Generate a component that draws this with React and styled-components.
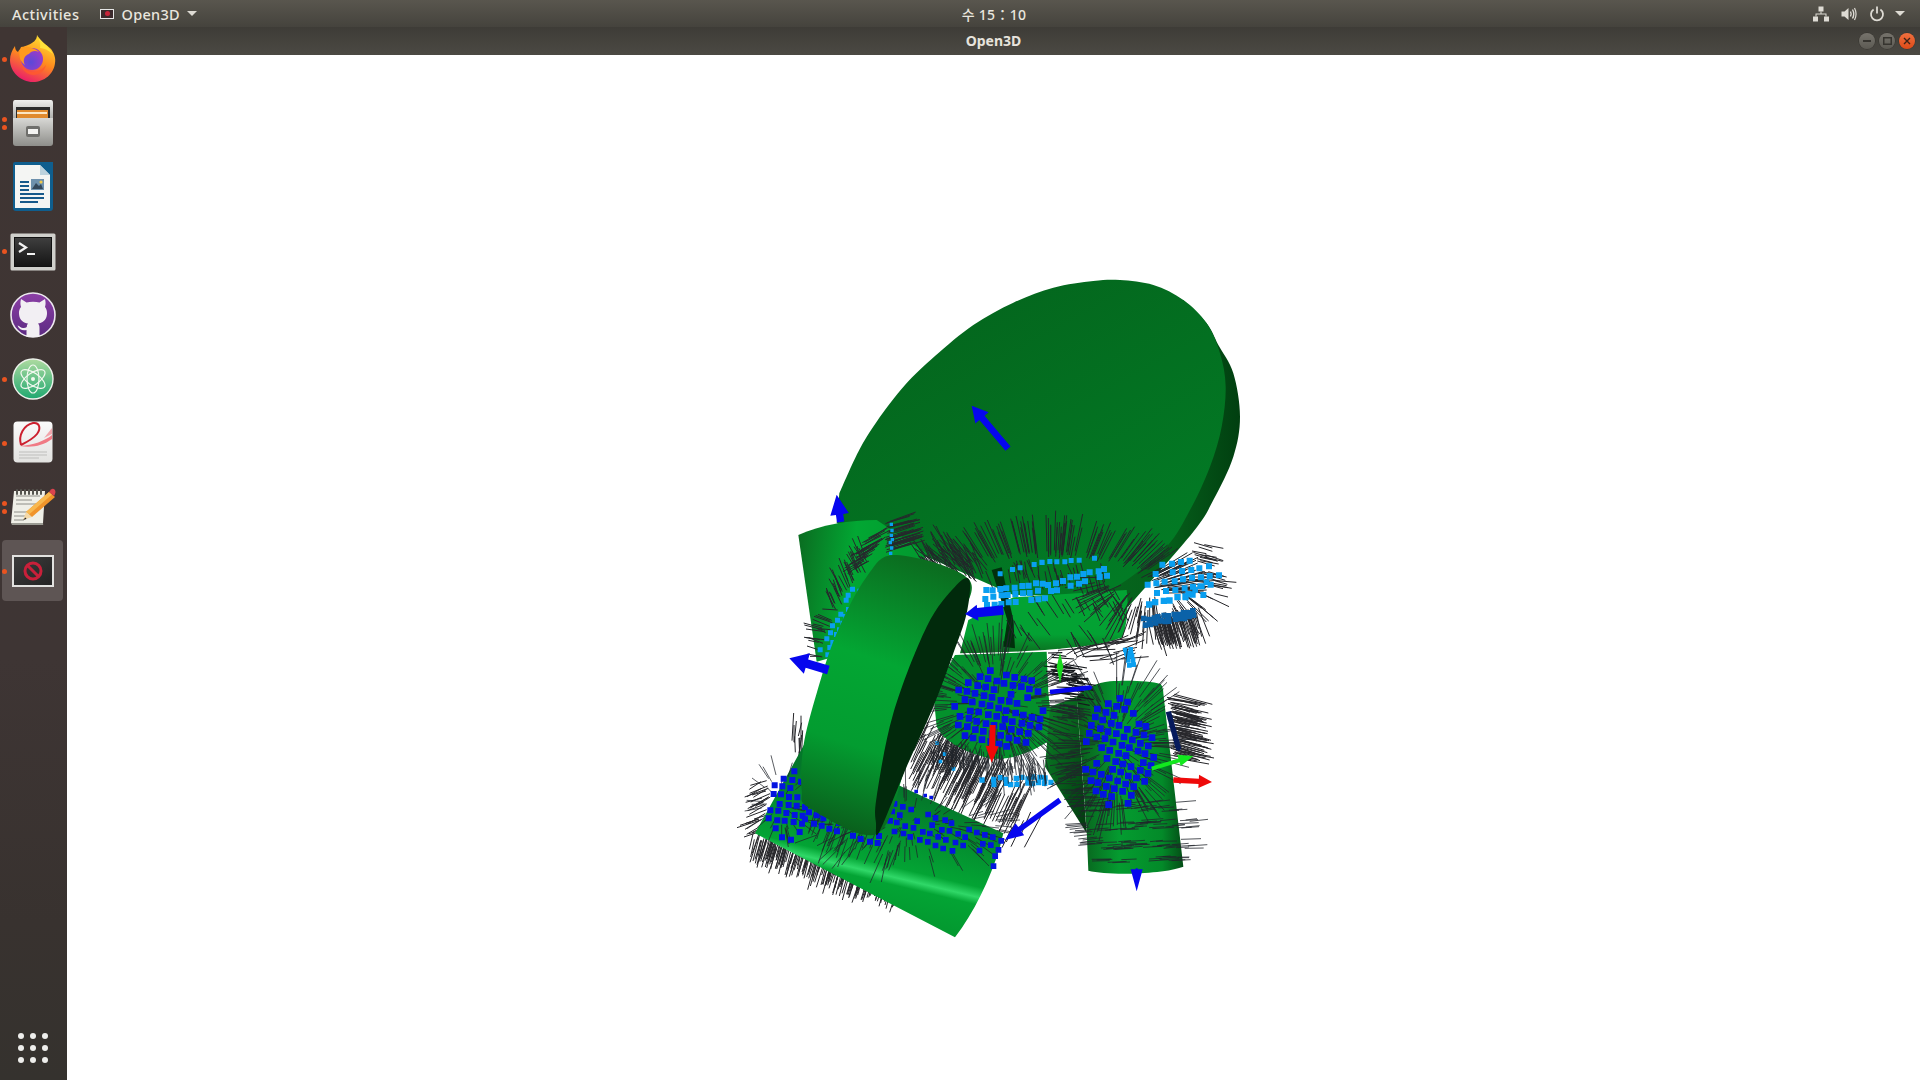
import React from "react";
import styled, { createGlobalStyle } from "styled-components";

const GlobalStyle = createGlobalStyle`
  html, body { margin: 0; padding: 0; background: #fff; overflow: hidden; }
  body { font-family: "Noto Sans", "Noto Sans CJK KR", sans-serif; }
`;

/* ---------- helpers for the 3D scene drawing ---------- */

const makeRandom = (seed) => () => {
  seed = (seed + 0x6d2b79f5) | 0;
  let t = Math.imul(seed ^ (seed >>> 15), 1 | seed);
  t = (t + Math.imul(t ^ (t >>> 7), 61 | t)) ^ t;
  return ((t ^ (t >>> 14)) >>> 0) / 4294967296;
};
const rnd = makeRandom(42);
const wobble = (v, amount = 4) => (v + (rnd() - 0.5) * amount).toFixed(0);

const smooth = (pts, close = true) => {
  const n = pts.length;
  const at = (i) => (close ? pts[(i + n) % n] : pts[Math.max(0, Math.min(n - 1, i))]);
  let d = `M${pts[0][0]} ${pts[0][1]}`;
  for (let i = 0; i < (close ? n : n - 1); i++) {
    const [p0, p1, p2, p3] = [at(i - 1), at(i), at(i + 1), at(i + 2)];
    const c1 = [p1[0] + (p2[0] - p0[0]) / 6, p1[1] + (p2[1] - p0[1]) / 6];
    const c2 = [p2[0] - (p3[0] - p1[0]) / 6, p2[1] - (p3[1] - p1[1]) / 6];
    d += `C${c1[0].toFixed(1)} ${c1[1].toFixed(1)} ${c2[0].toFixed(1)} ${c2[1].toFixed(1)} ${p2[0]} ${p2[1]}`;
  }
  return close ? d + "Z" : d;
};

// hairs growing from a line
const band = ([x0, y0], [x1, y1], width, n, dx, dy, jitter = 0.18) => {
  let d = "";
  for (let i = 0; i < n; i++) {
    const t = rnd();
    const x = x0 + (x1 - x0) * t + (rnd() - 0.5) * width;
    const y = y0 + (y1 - y0) * t + (rnd() - 0.5) * width;
    const k = 0.65 + rnd() * 0.55;
    const len = Math.hypot(dx, dy);
    const ex = dx * k + (rnd() - 0.5) * len * jitter;
    const ey = dy * k + (rnd() - 0.5) * len * jitter;
    d += `M${x.toFixed(0)} ${y.toFixed(0)}l${ex.toFixed(0)} ${ey.toFixed(0)}`;
  }
  return d;
};

// hairs radiating from an ellipse, short in the middle and long at the rim
const burst = (cx, cy, rx, ry, n, len, a0 = 0, a1 = 360, inner = 0) => {
  let d = "";
  for (let i = 0; i < n; i++) {
    const a = ((a0 + (a1 - a0) * rnd()) * Math.PI) / 180;
    const r = inner + (1 - inner) * Math.sqrt(rnd());
    const x = cx + Math.cos(a) * rx * r;
    const y = cy + Math.sin(a) * ry * r;
    const l = len * (0.15 + 0.95 * r) * (0.8 + rnd() * 0.35);
    d += `M${x.toFixed(0)} ${y.toFixed(0)}l${(Math.cos(a) * l).toFixed(0)} ${(Math.sin(a) * l).toFixed(0)}`;
  }
  return d;
};

// square point markers on a slightly rotated grid, thinning out to the rim
const dots = (cx, cy, rx, ry, step, rot, size, keep = 1) => {
  let d = "";
  const c = Math.cos((rot * Math.PI) / 180);
  const s = Math.sin((rot * Math.PI) / 180);
  const m = Math.ceil(Math.max(rx, ry) / step) + 1;
  for (let i = -m; i <= m; i++) {
    for (let j = -m; j <= m; j++) {
      const x = i * step * c - j * step * s;
      const y = i * step * s + j * step * c;
      const q = (x / rx) ** 2 + (y / ry) ** 2;
      if (q > 1) continue;
      if (rnd() > keep * (1 - q * 0.25)) continue;
      d += `M${wobble(cx + x)} ${wobble(cy + y)}h${size}v${size}h-${size}Z`;
    }
  }
  return d;
};

const dotsAlong = ([x0, y0], [x1, y1], width, step, size, keep = 0.85) => {
  let d = "";
  const len = Math.hypot(x1 - x0, y1 - y0);
  const ux = (x1 - x0) / len;
  const uy = (y1 - y0) / len;
  for (let a = 0; a < len; a += step) {
    for (let b = -width / 2; b <= width / 2; b += step) {
      if (rnd() > keep) continue;
      const x = x0 + ux * a - uy * b;
      const y = y0 + uy * a + ux * b;
      d += `M${wobble(x, 6)} ${wobble(y, 6)}h${size}v${size}h-${size}Z`;
    }
  }
  return d;
};

const arrowPath = (x1, y1, x2, y2, w, headW, headL) => {
  const l = Math.hypot(x2 - x1, y2 - y1);
  const ux = (x2 - x1) / l;
  const uy = (y2 - y1) / l;
  const nx = -uy;
  const ny = ux;
  const bx = x2 - ux * headL;
  const by = y2 - uy * headL;
  const p = (x, y) => `${x.toFixed(1)} ${y.toFixed(1)}`;
  return (
    `M${p(x1 + nx * w, y1 + ny * w)}L${p(bx + nx * w, by + ny * w)}L${p(bx + nx * headW, by + ny * headW)}` +
    `L${p(x2, y2)}L${p(bx - nx * headW, by - ny * headW)}L${p(bx - nx * w, by - ny * w)}L${p(x1 - nx * w, y1 - ny * w)}Z`
  );
};

const DISC_FACE =
  smooth(
    [
      [358, 40], [415, -85], [470, -175], [555, -285], [645, -372], [760, -465], [880, -532], [1000, -577], [1120, -597],
      [1200, -600], [1300, -585], [1390, -540], [1460, -470], [1500, -380], [1517, -280], [1505, -160],
      [1470, -40], [1410, 90], [1340, 200], [1220, 300], [1130, 350],
    ],
    false
  ) + "L880 345L620 230L350 130Z";

const DISC_RIM =
  smooth(
    [
      [1390, -540], [1460, -470], [1495, -405], [1540, -320], [1560, -190], [1540, -70], [1480, 60],
      [1420, 155], [1225, 380],
    ],
    false
  ) + "L1115 360L1000 300Z";

const HAIR_BACK = [
  band([1040, 500], [1210, 520], 70, 40, 70, -20, 0.5),
  band([590, 830], [850, 1040], 140, 190, 45, -95, 0.1),
  band([110, 1070], [540, 1210], 30, 170, -20, 70, 0.1),
  band([140, 900], [125, 1060], 40, 26, -55, 25, 0.3),
  band([225, 770], [240, 850], 30, 12, 5, -65, 0.2),
  band([1350, 640], [1370, 830], 30, 90, 90, 22, 0.18),
].join("");

const HAIR_CLUSTER = [
  burst(1290, 290, 170, 110, 70, 90, 0, 180, 0.5),
  band([1430, 200], [1470, 330], 40, 26, 50, 12),
  band([1290, 420], [1420, 395], 30, 75, 26, 85, 0.15),
].join("");

const HAIR_FRINGE = [
  burst(990, 340, 380, 130, 190, 95, 180, 360, 0.78),
  band([620, 220], [800, 300], 60, 50, -40, -70, 0.3),
  band([850, 260], [1150, 270], 50, 34, 15, 55, 0.3),
  band([900, 360], [1210, 340], 60, 20, 30, 55, 0.25),
  band([870, 420], [1200, 470], 60, 16, 28, 50, 0.35),
].join("");

const HAIR_UPPER_LEFT = [
  band([505, 130], [505, 215], 20, 42, 85, -25, 0.15),
  band([500, 140], [430, 260], 25, 35, -50, 30, 0.2),
  band([440, 240], [340, 380], 30, 34, -25, -55, 0.25),
  band([340, 380], [290, 530], 30, 18, -45, -10, 0.5),
].join("");

const HAIR_SPHERE = [
  burst(830, 670, 175, 165, 210, 95),
  band([650, 800], [980, 860], 50, 90, 5, 55, 0.4),
].join("");

const HAIR_CYLINDER_BOTTOM = [
  burst(560, 1030, 300, 110, 130, 60),
  burst(185, 970, 70, 90, 34, 55),
  band([290, 1000], [530, 1110], 70, 35, -30, 75, 0.2),
].join("");

const HAIR_RIGHT = [
  burst(1190, 790, 130, 190, 190, 95),
  band([1110, 980], [1380, 980], 30, 20, 55, -6, 0.1),
  band([1110, 1040], [1400, 1030], 30, 30, 55, -4, 0.1),
  band([1110, 1100], [1400, 1090], 30, 30, 55, -3, 0.08),
  band([1120, 1145], [1380, 1135], 14, 16, 50, -2, 0.06),
  band([1030, 1030], [1090, 1100], 20, 14, 60, -5, 0.1),
  band([1000, 840], [1090, 1000], 60, 40, 70, -5, 0.15),
  band([1000, 690], [1060, 700], 50, 30, 50, 8, 0.1),
].join("");

const HAIR_WINDOW = band([985, 530], [1060, 650], 60, 46, 55, 5, 0.25);

const DOTS_CYAN = [
  dotsAlong([790, 345], [980, 320], 44, 22, 18, 0.9),
  dotsAlong([980, 320], [1160, 270], 34, 22, 18, 0.95),
  dotsAlong([810, 285], [960, 245], 10, 22, 15, 0.8),
  dotsAlong([960, 245], [1130, 232], 10, 22, 15, 0.8),
  dots(1380, 290, 110, 65, 27, -8, 18, 1),
  dotsAlong([1280, 375], [1440, 335], 20, 22, 19, 0.95),
  dotsAlong([1400, 340], [1470, 300], 20, 22, 17, 0.9),
  dotsAlong([505, 130], [505, 215], 8, 14, 10, 0.9),
  dotsAlong([405, 325], [310, 515], 50, 21, 15, 0.85),
  dotsAlong([1215, 500], [1225, 550], 16, 12, 14, 1),
  dotsAlong([780, 900], [1000, 895], 22, 17, 16, 0.75),
  dotsAlong([640, 790], [690, 880], 20, 18, 11, 0.5),
].join("");

const DOTS_CLUSTER_DARK = dotsAlong([1265, 418], [1420, 392], 16, 15, 17, 1);

const DOTS_BLUE = [
  dots(825, 675, 140, 125, 26, 14, 20, 1),
  dots(1185, 810, 112, 165, 26, 20, 20, 1),
  dots(195, 965, 66, 105, 25, 10, 18, 1),
  dotsAlong([250, 1005], [480, 1080], 36, 25, 18, 0.9),
  dotsAlong([500, 1010], [830, 1125], 100, 26, 17, 0.78),
  dotsAlong([560, 930], [780, 1020], 16, 24, 11, 0.4),
].join("");

const BLUE_ARROWS = [
  arrowPath(864, -94, 755, -223, 10, 26, 48),
  arrowPath(362, 126, 350, 44, 11, 28, 60),
  arrowPath(325, 570, 208, 535, 13, 32, 55),
  arrowPath(850, 390, 735, 402, 14, 24, 38),
  arrowPath(1020, 960, 855, 1080, 8, 22, 55),
  arrowPath(1250, 1165, 1250, 1234, 3, 18, 66),
  arrowPath(990, 636, 1118, 622, 7, 8, 8),
].join("");

/* ---------- page layout ---------- */

const Screen = styled.div`
  width: 1920px;
  height: 1080px;
  display: flex;
  flex-direction: column;
  overflow: hidden;
`;

const TopBar = styled.header`
  height: 27px;
  flex: none;
  display: grid;
  grid-template-columns: 1fr auto 1fr;
  align-items: center;
  background: linear-gradient(#59564e, #45433d);
  color: #e9e6df;
  font-size: 14.5px;
  font-weight: 500;
`;

const BarLeft = styled.div`
  display: flex;
  align-items: center;
`;

const Activities = styled.span`
  margin-left: 12px;
  letter-spacing: 0.5px;
`;

const AppMenu = styled.div`
  display: flex;
  align-items: center;
  margin-left: 21px;
  gap: 7px;
  letter-spacing: 0.3px;
`;

const AppMenuIcon = styled.span`
  width: 14px;
  height: 10px;
  box-sizing: border-box;
  border: 1px solid #e6e6e6;
  background: #3c2a2c;
  display: grid;
  place-items: center;
  &::after {
    content: "";
    width: 5px;
    height: 5px;
    border-radius: 50%;
    background: #c9243a;
  }
`;

const Caret = styled.span`
  width: 0;
  height: 0;
  margin-left: ${(p) => p.$gap || 0}px;
  border-left: 5px solid transparent;
  border-right: 5px solid transparent;
  border-top: 5px solid #dedbd4;
`;

const Clock = styled.div`
  padding-left: 68px;
  font-weight: 500;
  font-size: 14px;
  letter-spacing: 0.3px;
  font-family: "Noto Sans", "Noto Sans CJK KR", sans-serif;
  white-space: pre;
`;

const BarRight = styled.div`
  display: flex;
  align-items: center;
  justify-content: flex-end;
  gap: 12px;
  padding-right: 15px;
  svg { display: block; }
`;

const Body = styled.div`
  flex: 1;
  min-height: 0;
  display: flex;
`;

const Dock = styled.nav`
  width: 67px;
  flex: none;
  display: flex;
  flex-direction: column;
  background: linear-gradient(#3f3533 0%, #3e3534 60%, #38322f 85%, #35322e 100%);
`;

const DockItem = styled.div`
  position: relative;
  height: 64px;
  flex: none;
  padding-right: 1px;
  box-sizing: border-box;
  display: grid;
  place-items: center;
  &::before {
    content: "";
    display: ${(p) => (p.$active ? "block" : "none")};
    position: absolute;
    left: 2px;
    top: 1px;
    width: 61px;
    height: 61px;
    border-radius: 4px;
    background: #5e5554;
  }
  svg {
    position: relative;
    display: block;
  }
`;

const Pips = styled.span`
  position: absolute;
  left: 2px;
  top: 0;
  bottom: 0;
  display: flex;
  flex-direction: column;
  justify-content: center;
  gap: 3px;
`;

const Pip = styled.i`
  width: 5px;
  height: 5px;
  border-radius: 50%;
  background: #e95420;
`;

const AppGrid = styled.div`
  margin: auto 0 17px 18px;
  display: grid;
  grid-template-columns: repeat(3, 6px);
  gap: 6px;
`;

const AppGridDot = styled.i`
  width: 6px;
  height: 6px;
  border-radius: 50%;
  background: #eeeeec;
`;

const Main = styled.main`
  flex: 1;
  min-width: 0;
  display: flex;
  flex-direction: column;
`;

const TitleBar = styled.div`
  position: relative;
  height: 28px;
  flex: none;
  display: flex;
  align-items: center;
  justify-content: center;
  padding-bottom: 2px;
  box-sizing: border-box;
  background: linear-gradient(#3e3c37, #4b4943);
  color: #e6e3dc;
  font-size: 14px;
  font-weight: 700;
`;

const WindowButtons = styled.div`
  position: absolute;
  right: 5px;
  top: 6px;
  display: flex;
  gap: 4px;
`;

const WindowButton = styled.span`
  width: 16px;
  height: 16px;
  border-radius: 50%;
  display: grid;
  place-items: center;
  background: ${(p) => (p.$close ? "linear-gradient(#f0703f, #dc4a17)" : "linear-gradient(#76736c, #5c5a53)")};
  box-shadow: 0 0 0 0.5px #35332e;
  svg { display: block; }
`;

const Viewport = styled.div`
  flex: 1;
  min-height: 0;
  background: #fff;
`;

const SceneSvg = styled.svg`
  display: block;
  width: 100%;
  height: 100%;
`;

/* ---------- 3D scene ---------- */

const Scene = () => (
  <SceneSvg viewBox="-1959 -1275 5559 3075" preserveAspectRatio="xMinYMin meet">
    <defs>
      <linearGradient id="discFace" x1="0.25" y1="0.1" x2="0.8" y2="0.9">
        <stop offset="0" stopColor="#04661d" />
        <stop offset="1" stopColor="#027b25" />
      </linearGradient>
      <linearGradient id="discRim" x1="0" y1="0.5" x2="1" y2="0.5">
        <stop offset="0" stopColor="#06691e" />
        <stop offset="0.6" stopColor="#05601b" />
        <stop offset="1" stopColor="#013f10" />
      </linearGradient>
      <linearGradient id="leftCyl" x1="0" y1="0" x2="1" y2="0.15">
        <stop offset="0" stopColor="#0b6a20" />
        <stop offset="0.45" stopColor="#02a733" />
        <stop offset="1" stopColor="#02992e" />
      </linearGradient>
      <linearGradient id="tilted" x1="0.55" y1="0" x2="0.35" y2="1">
        <stop offset="0" stopColor="#0b6e20" />
        <stop offset="0.38" stopColor="#03a633" />
        <stop offset="0.7" stopColor="#039c30" />
        <stop offset="1" stopColor="#0a5f1c" />
      </linearGradient>
      <linearGradient id="bottomCyl" x1="0.6" y1="0.25" x2="0.42" y2="0.85">
        <stop offset="0" stopColor="#04762a" />
        <stop offset="0.62" stopColor="#03a434" />
        <stop offset="0.7" stopColor="#30d868" />
        <stop offset="0.76" stopColor="#03a434" />
        <stop offset="1" stopColor="#039a30" />
      </linearGradient>
      <linearGradient id="rightCyl" x1="0" y1="0" x2="1" y2="0">
        <stop offset="0" stopColor="#0a5a1b" />
        <stop offset="0.4" stopColor="#049c30" />
        <stop offset="0.8" stopColor="#038a29" />
        <stop offset="1" stopColor="#044d16" />
      </linearGradient>
      <linearGradient id="midCyl" x1="0" y1="0" x2="0" y2="1">
        <stop offset="0" stopColor="#03a433" />
        <stop offset="0.7" stopColor="#03a133" />
        <stop offset="1" stopColor="#0c6e20" />
      </linearGradient>
      <linearGradient id="wedge" x1="0" y1="0" x2="1" y2="1">
        <stop offset="0" stopColor="#0b8127" />
        <stop offset="1" stopColor="#01390e" />
      </linearGradient>
    </defs>

    <path d={HAIR_BACK} stroke="#26262a" strokeWidth="3" fill="none" />

    {/* big disc */}
    <path d={DISC_RIM} fill="url(#discRim)" />
    <path d={DISC_FACE} fill="url(#discFace)" />

    {/* cylinder on the upper left */}
    <path d="M235 165C300 135 390 120 470 120L620 220L520 480L290 545Z" fill="url(#leftCyl)" />

    {/* central cylinder */}
    <path d="M880 352L1220 330C1226 380 1222 430 1208 472C1130 500 1000 515 720 520L745 420Z" fill="url(#midCyl)" />
    <path d="M815 270L845 262L880 420L885 505L850 500L862 420Z" fill="#012f0c" />

    {/* sphere patch */}
    <path d="M640 640L705 525L980 515L985 640L1000 775C930 820 860 850 790 830C720 810 670 780 650 740Z" fill="#04912c" />

    <path d={HAIR_CLUSTER} stroke="#26262a" strokeWidth="3" fill="none" />
    <path d={HAIR_FRINGE} stroke="#22262a" strokeWidth="3" fill="none" />
    <path d={HAIR_UPPER_LEFT} stroke="#26282c" strokeWidth="3" fill="none" />
    <path d={DOTS_CYAN} fill="#0a9ff0" />
    <path d={DOTS_CLUSTER_DARK} fill="#0b62a8" />

    {/* wedge and right cylinder */}
    <path d="M990 680L1070 650L1100 1060L975 860Z" fill="url(#wedge)" />
    <path
      d="M1070 650C1095 625 1130 608 1170 604C1220 600 1290 602 1322 612C1328 620 1330 630 1330 640L1390 1160C1330 1182 1170 1188 1105 1172L1100 1050Z"
      fill="url(#rightCyl)"
    />

    {/* bottom cylinder */}
    <path d="M260 780L105 1060L705 1372C760 1300 810 1200 840 1100L850 1060L555 925Z" fill="url(#bottomCyl)" />

    <path d={HAIR_SPHERE} stroke="#20242a" strokeWidth="2.6" fill="none" opacity="0.9" />
    <path d={HAIR_RIGHT} stroke="#20242a" strokeWidth="2.6" fill="none" opacity="0.9" />
    <path d={HAIR_CYLINDER_BOTTOM} stroke="#20242a" strokeWidth="2.6" fill="none" opacity="0.85" />
    <path d={HAIR_WINDOW} stroke="#15181c" strokeWidth="3.5" fill="none" />
    <path d={DOTS_BLUE} fill="#0414e0" />

    {/* tilted disc in front */}
    <path
      d={smooth([
        [530, 225], [440, 290], [350, 460], [290, 640], [250, 800], [245, 930], [270, 985], [470, 1062],
        [560, 850], [640, 620], [700, 450], [748, 300],
      ])}
      fill="url(#tilted)"
    />
    <path
      d={smooth([
        [748, 300], [740, 400], [700, 520], [640, 680], [560, 860], [478, 1055], [468, 1030], [470, 950],
        [520, 700], [620, 440], [705, 320],
      ])}
      fill="#012a0c"
    />

    {/* axis arrows */}
    <path d={BLUE_ARROWS} fill="#0606ee" />
    <path d={arrowPath(818, 735, 815, 848, 9, 20, 50)} fill="#f00808" />
    <path d={arrowPath(1360, 900, 1476, 906, 8, 20, 40)} fill="#ee0a0a" />
    <path d={arrowPath(1295, 866, 1420, 828, 6, 18, 45)} fill="#12e81e" />
    <path d="M1020 518L1030 560L1020 610L1010 560Z" fill="#18d81e" />
    <path d={arrowPath(1345, 695, 1378, 815, 8, 9, 10)} fill="#061a5c" />
  </SceneSvg>
);

/* ---------- dock icons ---------- */

const FirefoxIcon = () => (
  <svg width="46" height="47" viewBox="0 0 46 47" style={{ marginTop: -2 }}>
    <defs>
      <linearGradient id="ffBody" x1="0.7" y1="0.1" x2="0.3" y2="1">
        <stop offset="0" stopColor="#ffd42e" />
        <stop offset="0.45" stopColor="#ff8a1e" />
        <stop offset="1" stopColor="#e9176e" />
      </linearGradient>
      <radialGradient id="ffGlobe" cx="0.45" cy="0.65" r="0.6">
        <stop offset="0" stopColor="#5b48d8" />
        <stop offset="1" stopColor="#9a3cc8" />
      </radialGradient>
    </defs>
    <path d="M27 0C29 6 36 9 41 14C44 18 46 23 45 28C44 39 34 47 23 47C11 47 0 37 0 25C0 20 2 15 5 11C5 14 6 16 8 17C10 13 15 11 18 10C23 8 27 5 27 0Z" fill="url(#ffBody)" />
    <path d="M27 0C31 7 39 11 43 19C38 15 34 13 30 13C31 8 29 5 27 0Z" fill="#ffe23a" />
    <circle cx="22" cy="24" r="11" fill="url(#ffGlobe)" />
    <path d="M11 12C17 11 25 13 29 17C25 15 21 16 19 19C15 20 12 25 15 30C9 26 8 18 11 12Z" fill="#ff9a1e" />
    <path d="M11 29C15 38 28 40 36 30C33 43 14 44 11 29Z" fill="#ff5a2c" opacity="0.8" />
  </svg>
);

const FilesIcon = () => (
  <svg width="42" height="46" viewBox="0 0 42 46">
    <defs>
      <linearGradient id="cabTop" x1="0" y1="0" x2="0" y2="1">
        <stop offset="0" stopColor="#f0f0ee" />
        <stop offset="1" stopColor="#a9a9a6" />
      </linearGradient>
      <linearGradient id="cabFront" x1="0" y1="0" x2="0" y2="1">
        <stop offset="0" stopColor="#d8d8d5" />
        <stop offset="1" stopColor="#8e8e8a" />
      </linearGradient>
    </defs>
    <path d="M3 0H39Q41 0 41 3V20H1V3Q1 0 3 0Z" fill="url(#cabTop)" />
    <rect x="4" y="7" width="34" height="13" fill="#2c2c2c" />
    <rect x="5" y="10" width="31" height="9" fill="#e08a2e" />
    <rect x="5" y="12" width="30" height="2" fill="#fbe6c4" />
    <path d="M1 18H41V43Q41 46 38 46H4Q1 46 1 43Z" fill="url(#cabFront)" />
    <rect x="14" y="26" width="14" height="11" rx="2" fill="#6f6f6c" />
    <rect x="16" y="29" width="10" height="5" fill="#f4f4f2" />
  </svg>
);

const WriterIcon = () => (
  <svg width="42" height="50" viewBox="0 0 42 50">
    <path d="M3 0H40Q41 0 41 1V46Q41 49 38 49H4Q1 49 1 46V2Q1 0 3 0Z" fill="#0f5e8e" />
    <path d="M3 3H28L38 13V46H3Z" fill="#f4f5f3" />
    <path d="M28 0H41V13Z" fill="#0f5e8e" />
    <path d="M28 3L38 13H28Z" fill="#bcd2dd" />
    <path d="M8 19H17V21H8ZM8 23H17V25H8ZM8 27H17V29H8ZM8 31H32V33H8ZM8 35H32V37H8ZM8 39H26V41H8Z" fill="#16598a" />
    <rect x="19" y="17" width="13" height="11" fill="#6e91ad" />
    <path d="M20 27L24 21L27 24L29 22L31 27Z" fill="#33475a" />
    <circle cx="29" cy="20" r="1.6" fill="#f0c94a" />
  </svg>
);

const TerminalIcon = () => (
  <svg width="46" height="38" viewBox="0 0 46 38" style={{ marginTop: 2 }}>
    <defs>
      <linearGradient id="termScreen" x1="0" y1="0" x2="0" y2="1">
        <stop offset="0" stopColor="#3e3e3e" />
        <stop offset="1" stopColor="#151515" />
      </linearGradient>
    </defs>
    <rect x="0.5" y="0.5" width="45" height="37" rx="1.5" fill="#cfcfcb" />
    <rect x="4" y="4" width="38" height="30" fill="#111" />
    <rect x="5" y="5" width="36" height="28" fill="url(#termScreen)" />
    <path d="M9 10L16 14.5L9 19" fill="none" stroke="#f2f2f2" strokeWidth="2.2" />
    <rect x="17" y="20" width="8" height="2" fill="#f2f2f2" />
  </svg>
);

const GithubIcon = () => (
  <svg width="46" height="46" viewBox="0 0 46 46">
    <defs>
      <linearGradient id="ghBg" x1="0" y1="0" x2="0" y2="1">
        <stop offset="0" stopColor="#8c3fa6" />
        <stop offset="1" stopColor="#5c2b82" />
      </linearGradient>
    </defs>
    <circle cx="23" cy="23" r="22" fill="url(#ghBg)" stroke="#ece8ee" strokeWidth="1.6" />
    <path
      d="M11 7L16.5 10.5C20.5 9.4 25.5 9.4 29.5 10.5L35 7C35.8 10 35.8 12.5 35 15C36.6 17 37.2 19 37 22C36.6 28.5 32 31 28 31.5C29.2 32.8 29.5 34 29.5 36V45H16.5V38C13 39 9.5 38 7.5 33.5C9.5 34 11 36 13 36C14.5 36.2 15.8 35.8 16.8 35C16.8 33.5 17.3 32.3 18 31.5C14 31 9.4 28.5 9 22C8.8 19 9.4 17 11 15C10.2 12.5 10.2 10 11 7Z"
      fill="#f2eff3"
    />
  </svg>
);

const AtomIcon = () => (
  <svg width="42" height="42" viewBox="0 0 42 42">
    <defs>
      <linearGradient id="atomBg" x1="0" y1="0" x2="0" y2="1">
        <stop offset="0" stopColor="#aedba0" />
        <stop offset="1" stopColor="#1fa870" />
      </linearGradient>
    </defs>
    <circle cx="21" cy="21" r="20" fill="url(#atomBg)" stroke="#eef2ec" strokeWidth="1.4" />
    <g fill="none" stroke="#f2f8f0" strokeWidth="1.2">
      <ellipse cx="21" cy="21" rx="14" ry="6" transform="rotate(35 21 21)" />
      <ellipse cx="21" cy="21" rx="14" ry="6" transform="rotate(-35 21 21)" />
      <ellipse cx="21" cy="21" rx="14" ry="6" transform="rotate(90 21 21)" />
    </g>
    <circle cx="21" cy="21" r="2" fill="#f2f8f0" />
  </svg>
);

const ReaderIcon = () => (
  <svg width="40" height="42" viewBox="0 0 40 42" style={{ marginTop: -2 }}>
    <defs>
      <linearGradient id="readerBg" x1="0" y1="0" x2="0" y2="1">
        <stop offset="0" stopColor="#fafafa" />
        <stop offset="1" stopColor="#e2e2e0" />
      </linearGradient>
    </defs>
    <rect x="0.5" y="0.5" width="39" height="41" rx="4" fill="url(#readerBg)" />
    <path d="M39 7L31 17L39 13Z" fill="#f2a6ac" />
    <path d="M7 25C20 24 32 20 39 14V18C30 25 18 27 7 25Z" fill="#f07a84" />
    <path d="M8 24C5 14 11 4 20 2C27 1 28 8 24 13C20 18 14 21 8 24" fill="none" stroke="#cc1f2e" strokeWidth="2" />
    <path d="M6 31H34M6 34H34M6 37H26" stroke="#bdbdbb" strokeWidth="1.2" />
  </svg>
);

const NotesIcon = () => (
  <svg width="46" height="38" viewBox="0 0 46 38" style={{ marginTop: -3 }}>
    <path d="M4 4H35L33 36H1Z" fill="#efefe7" />
    <path d="M1 36H33L33.2 38H2Z" fill="#9a9a92" />
    <path d="M6 9H30M6 13H22M6 17H28M4 25H18M4 29H22M4 33H14" stroke="#8e8e88" strokeWidth="1" />
    <path d="M7 3V7M11 3V7M15 3V7M19 3V7M23 3V7M27 3V7M31 3V7" stroke="#55554f" strokeWidth="2" strokeLinecap="round" />
    <path d="M39 5L45 10L22 30L16 25Z" fill="#f0942a" />
    <path d="M39 5L42 7.5L19 27.5L16 25Z" fill="#f8b84e" />
    <path d="M16 25L22 30L13 33Z" fill="#f4d9a8" />
    <path d="M13 33L15.5 30.5L16.5 32Z" fill="#222" />
    <path d="M39 5L41 2.5Q43 1 45 3Q46 5 45 7L44 9Z" fill="#d9434e" />
  </svg>
);

const OpenWindowIcon = () => (
  <svg width="42" height="32" viewBox="0 0 42 32">
    <defs>
      <linearGradient id="winBg" x1="0" y1="0" x2="1" y2="1">
        <stop offset="0" stopColor="#3c3c3c" />
        <stop offset="1" stopColor="#232323" />
      </linearGradient>
    </defs>
    <rect x="1" y="1" width="40" height="30" fill="url(#winBg)" stroke="#e2e2e0" strokeWidth="2" />
    <circle cx="21" cy="16" r="8" fill="none" stroke="#c8203a" strokeWidth="3" />
    <path d="M15.5 10.5L26.5 21.5" stroke="#c8203a" strokeWidth="3" />
  </svg>
);

const DOCK_ITEMS = [
  { key: "firefox", Icon: FirefoxIcon, pips: 1 },
  { key: "files", Icon: FilesIcon, pips: 2 },
  { key: "writer", Icon: WriterIcon, pips: 0 },
  { key: "terminal", Icon: TerminalIcon, pips: 1 },
  { key: "github", Icon: GithubIcon, pips: 0 },
  { key: "atom", Icon: AtomIcon, pips: 1 },
  { key: "reader", Icon: ReaderIcon, pips: 1 },
  { key: "notes", Icon: NotesIcon, pips: 2 },
  { key: "open3d", Icon: OpenWindowIcon, pips: 1, active: true },
];

/* ---------- status icons ---------- */

const NetworkIcon = () => (
  <svg width="16" height="16" viewBox="0 0 16 16" fill="#dedbd4">
    <rect x="5.5" y="0.5" width="5" height="5" />
    <rect x="0" y="10.5" width="5" height="5" />
    <rect x="11" y="10.5" width="5" height="5" />
    <path d="M7.5 5.5H8.5V7.5H13.5V10.5H12.5V8.5H3.5V10.5H2.5V7.5H7.5Z" />
  </svg>
);

const VolumeIcon = () => (
  <svg width="16" height="16" viewBox="0 0 16 16" fill="none" stroke="#dedbd4">
    <path d="M0.5 5.5H3.5L7.5 2V14L3.5 10.5H0.5Z" fill="#dedbd4" stroke="none" />
    <path d="M9.5 5.5Q10.8 8 9.5 10.5" strokeWidth="1.4" />
    <path d="M11.5 3.5Q14 8 11.5 12.5" strokeWidth="1.4" />
    <path d="M13.5 2Q16.6 8 13.5 14" strokeWidth="1.2" />
  </svg>
);

const PowerIcon = () => (
  <svg width="16" height="16" viewBox="0 0 16 16" fill="none" stroke="#dedbd4" strokeWidth="1.8">
    <path d="M4.6 3.4A6 6 0 1 0 11.4 3.4" />
    <path d="M8 0.5V7.5" />
  </svg>
);

const App = () => (
  <Screen>
    <GlobalStyle />
    <TopBar>
      <BarLeft>
        <Activities>Activities</Activities>
        <AppMenu>
          <AppMenuIcon />
          Open3D
          <Caret />
        </AppMenu>
      </BarLeft>
      <Clock>수 15：10</Clock>
      <BarRight>
        <NetworkIcon />
        <VolumeIcon />
        <PowerIcon />
        <Caret $gap={-2} />
      </BarRight>
    </TopBar>
    <Body>
      <Dock>
        {DOCK_ITEMS.map(({ key, Icon, pips, active }) => (
          <DockItem key={key} $active={active}>
            <Pips>
              {Array.from({ length: pips }, (_, i) => (
                <Pip key={i} />
              ))}
            </Pips>
            <Icon />
          </DockItem>
        ))}
        <AppGrid>
          {Array.from({ length: 9 }, (_, i) => (
            <AppGridDot key={i} />
          ))}
        </AppGrid>
      </Dock>
      <Main>
        <TitleBar>
          Open3D
          <WindowButtons>
            <WindowButton>
              <svg width="8" height="2"><rect width="8" height="2" fill="#36342f" /></svg>
            </WindowButton>
            <WindowButton>
              <svg width="9" height="8"><rect x="0.75" y="0.75" width="7.5" height="6.5" fill="none" stroke="#36342f" strokeWidth="1.5" /></svg>
            </WindowButton>
            <WindowButton $close>
              <svg width="8" height="8"><path d="M1 1L7 7M7 1L1 7" stroke="#3c2216" strokeWidth="1.4" /></svg>
            </WindowButton>
          </WindowButtons>
        </TitleBar>
        <Viewport>
          <Scene />
        </Viewport>
      </Main>
    </Body>
  </Screen>
);

export default App;
